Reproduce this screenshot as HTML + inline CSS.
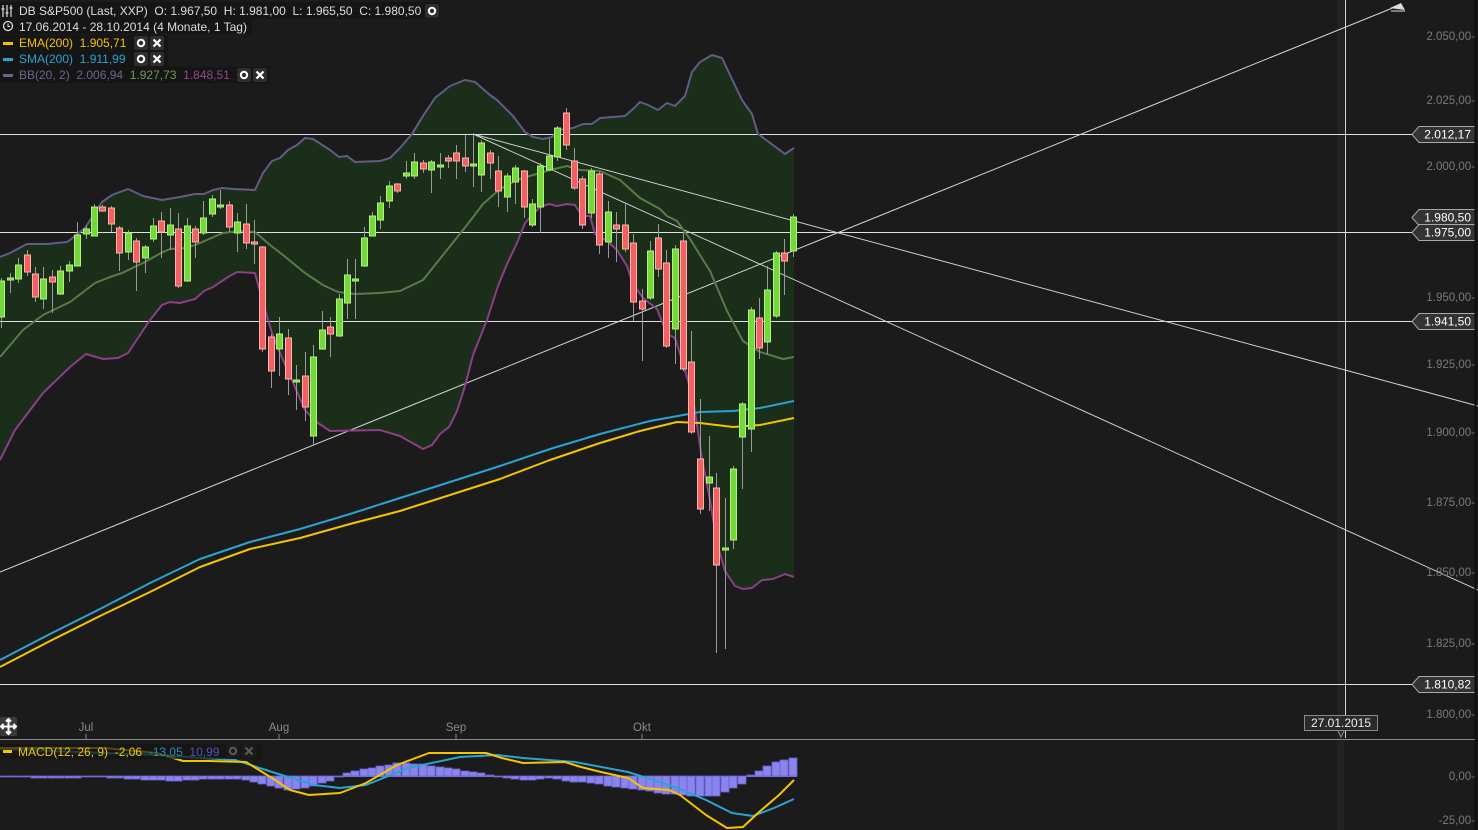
<!DOCTYPE html>
<html><head><meta charset="utf-8"><style>
html,body{margin:0;padding:0;background:#1c1b1b;width:1478px;height:830px;overflow:hidden}
svg{display:block}
text{font-family:"Liberation Sans",Arial,sans-serif;white-space:pre}
</style></head><body>
<svg id="s" width="1478" height="830" xmlns="http://www.w3.org/2000/svg">
<rect width="1478" height="830" fill="#1c1b1b"/>
<rect x="1337" y="0" width="7" height="830" fill="#232222"/>
<g id="g"></g>
<line x1="1475.5" y1="0" x2="1475.5" y2="830" stroke="#0e0e0e" stroke-width="2"/>
<g font-size="11.5" fill="#7a7a7a" text-anchor="end">
<text x="1475" y="40">2.050,00-</text>
<text x="1475" y="104">2.025,00-</text>
<text x="1475" y="170">2.000,00-</text>
<text x="1475" y="301">1.950,00-</text>
<text x="1475" y="368">1.925,00-</text>
<text x="1475" y="436">1.900,00-</text>
<text x="1475" y="506">1.875,00-</text>
<text x="1475" y="576">1.850,00-</text>
<text x="1475" y="647">1.825,00-</text>
<text x="1475" y="718">1.800,00-</text>
<text x="1475" y="780">0,00-</text>
<text x="1475" y="824">-25,00-</text>
</g>
<line x1="0" y1="739.5" x2="1475" y2="739.5" stroke="#8a8a8a" stroke-width="1"/>
<g font-size="11.5" fill="#8a8a8a" text-anchor="middle">
<text x="86" y="731">Jul</text><text x="279" y="731">Aug</text><text x="456" y="731">Sep</text><text x="642" y="731">Okt</text>
</g>
<g stroke="#8a8a8a"><line x1="86" y1="734" x2="86" y2="739"/><line x1="279" y1="734" x2="279" y2="739"/><line x1="456" y1="734" x2="456" y2="739"/><line x1="642" y1="734" x2="642" y2="739"/></g>
<rect x="1304.5" y="715.5" width="73" height="15" fill="#2a2a2a" stroke="#8a8a8a"/>
<path d="M1338 731 L1341 737 L1344 731" fill="#2a2a2a" stroke="#8a8a8a"/>
<text x="1341" y="727" font-size="12" fill="#eee" text-anchor="middle">27.01.2015</text>
<rect x="0" y="717" width="17" height="19" rx="2" fill="#3a3a3a"/>
<path d="M8.5 719 V734 M1 726.5 H16 M6 721.5 L8.5 719 L11 721.5 M6 731.5 L8.5 734 L11 731.5 M3.5 724 L1 726.5 L3.5 729 M13.5 724 L16 726.5 L13.5 729" stroke="#fff" stroke-width="2" fill="none"/>
<g font-size="12">
<rect x="0" y="2" width="440" height="17" fill="#141414" opacity=".8"/>
<rect x="0" y="18" width="252" height="16" fill="#141414" opacity=".8"/>
<rect x="0" y="35" width="168" height="16" fill="#141414" opacity=".8"/>
<rect x="0" y="51" width="168" height="16" fill="#141414" opacity=".8"/>
<rect x="0" y="67" width="270" height="16" fill="#141414" opacity=".8"/>
<g stroke="#ddd" stroke-width="1.2" fill="none"><path d="M3 5v12M7 5v12M11 5v12"/><path d="M1.5 9h3M5.5 13h3M9.5 8h3"/></g>
<text x="19" y="15" fill="#ddd">DB S&amp;P500 (Last, XXP)  O: 1.967,50  H: 1.981,00  L: 1.965,50  C: 1.980,50</text>
<circle cx="8" cy="26" r="4.5" stroke="#ddd" stroke-width="1.3" fill="none"/><path d="M8 23.5v3h2" stroke="#ddd" fill="none"/>
<text x="19" y="31" fill="#ddd">17.06.2014 - 28.10.2014 (4 Monate, 1 Tag)</text>
<rect x="3" y="42" width="10" height="3" fill="#f5c400"/>
<text x="19" y="47" fill="#f5c400">EMA(200)  1.905,71</text>
<rect x="3" y="58" width="10" height="3" fill="#2aa3d2"/>
<text x="19" y="63" fill="#2aa3d2">SMA(200)  1.911,99</text>
<rect x="3" y="74" width="10" height="3" fill="#6b6590"/>
<text x="19" y="79" fill="#6b6590">BB(20, 2)  2.006,94  <tspan fill="#6f9a55">1.927,73</tspan>  <tspan fill="#8e4a8a">1.848,51</tspan></text>
</g>
<g id="icons"></g>
<rect x="0" y="744" width="262" height="15" fill="#141414" opacity=".7"/>
<rect x="3" y="750" width="9" height="3" fill="#f5c400"/>
<text x="18" y="756" font-size="12" fill="#f5c400">MACD(12, 26, 9)  -2,06  <tspan fill="#2a8fb8">-13,05</tspan>  <tspan fill="#5a52b0">10,99</tspan></text>
</svg>
<script>
var g=document.getElementById('g'),h='';
function pl(p){return p.map(function(a){return a[0]+','+a[1]}).join(' ')}
var up=[[0,257],[10,253],[27,244],[47,244],[67,242],[70,240],[85,228],[102,202],[112,195],[128,189],[143,196],[162,200],[180,197],[195,194],[204,194],[213,190],[222,188],[233,189],[255,190],[263,173],[272,161],[280,158],[288,150],[297,145],[305,138],[313,139],[330,150],[339,157],[347,156],[355,162],[380,161],[390,158],[400,148],[412,134],[423,116],[435,98],[450,86],[465,80],[475,82],[490,95],[497,100],[513,116],[525,132],[533,137],[543,139],[552,137],[558,130],[573,128],[583,124],[592,124],[600,118],[625,116],[633,109],[640,102],[648,105],[658,110],[667,103],[675,106],[685,96],[692,72],[700,62],[712,55],[722,58],[730,75],[742,100],[752,114],[758,134],[773,145],[785,154],[794,148]];
var lo=[[0,460],[5,450],[15,430],[43,393],[70,367],[86,354],[103,359],[118,358],[128,353],[150,320],[162,305],[170,302],[180,303],[195,299],[204,291],[213,287],[228,277],[237,272],[255,273],[263,303],[272,333],[280,353],[305,410],[315,421],[330,431],[380,430],[400,436],[423,449],[432,445],[440,434],[449,427],[457,411],[465,386],[473,355],[487,320],[498,286],[507,264],[517,243],[525,223],[540,207],[549,204],[557,206],[567,204],[575,205],[582,216],[590,216],[595,234],[607,241],[617,250],[627,266],[633,284],[643,298],[657,309],[667,334],[675,338],[683,363],[693,398],[702,459],[710,500],[717,543],[725,571],[735,586],[743,589],[752,588],[762,580],[773,579],[785,574],[794,577]];
var mid=[[0,357],[23,330],[43,315],[70,302],[95,283],[110,277],[122,273],[143,263],[163,252],[170,249],[187,248],[200,243],[223,233],[240,231],[255,232],[270,245],[283,255],[305,273],[323,285],[338,292],[355,294],[380,293],[400,291],[423,280],[447,250],[467,225],[483,204],[500,189],[517,180],[533,175],[550,170],[567,166],[580,170],[600,171],[620,180],[640,198],[660,209],[667,216],[677,221],[690,239],[710,271],[727,311],[743,341],[760,352],[783,359],[794,357]];
h+='<polygon points="'+pl(up.concat(lo.slice().reverse()))+'" fill="#1a2e1a"/>';
var sma=[[0,660],[50,634],[100,609],[150,583],[200,559],[250,542],[300,529],[350,514],[400,498],[450,482],[500,466],[550,449],[600,434],[650,421],[700,412],[733,411],[760,408],[794,401]];
var ema=[[0,667],[50,641],[100,616],[150,592],[200,567],[250,549],[300,538],[350,524],[400,511],[450,495],[500,479],[550,460],[600,443],[640,431],[677,422],[700,423],[733,427],[760,425],[794,418]];
[134,232,321,684].forEach(function(y){h+='<line x1="0" y1="'+(y+.5)+'" x2="1412" y2="'+(y+.5)+'" stroke="#e0e0e0" stroke-width="1"/>'});
h+='<line x1="1345.5" y1="0" x2="1345.5" y2="738" stroke="#d8d8d8" stroke-width="1"/>';
h+='<line x1="0" y1="572" x2="1400" y2="5" stroke="#d8d8d8" stroke-width="1"/>';
h+='<line x1="473" y1="134" x2="1478" y2="406" stroke="#d0d0d0" stroke-width="1"/>';
h+='<line x1="473" y1="134" x2="1478" y2="590" stroke="#d0d0d0" stroke-width="1"/>';
h+='<path d="M1390 8 L1401 3 L1405 10 Z" fill="#ddd"/><line x1="1391" y1="11" x2="1405" y2="11" stroke="#ddd"/>';
var L=' fill="none" stroke-linejoin="round" stroke-width="2" stroke=';
h+='<polyline points="'+pl(up)+'"'+L+'"#625c85"/>';
h+='<polyline points="'+pl(lo)+'"'+L+'"#8b3f86"/>';
h+='<polyline points="'+pl(mid)+'"'+L+'"#5c7a48"/>';
h+='<polyline points="'+pl(sma)+'"'+L+'"#2aa3d2"/>';
h+='<polyline points="'+pl(ema)+'"'+L+'"#f5c400"/>';
var C=[[1,317,281,278,328],[10,278,278,273,293],[18,279,265,258,283],[27,255,272,250,276],[35,274,297,267,302],[43,299,279,267,309],[52,277,282,270,313],[60,294,271,266,295],[69,271,265,261,282],[77,266,235,222,266],[86,234,229,226,239],[94,236,207,204,236],[102,207,211,205,212],[111,208,224,206,232],[119,228,253,226,271],[128,252,233,230,260],[136,241,262,238,291],[145,258,247,245,273],[153,239,226,218,242],[161,221,232,212,258],[170,235,225,208,250],[178,229,286,213,288],[187,281,226,218,282],[195,229,242,226,258],[203,233,218,201,235],[212,214,199,195,217],[220,205,205,190,209],[229,205,227,201,232],[237,233,222,213,252],[246,224,243,204,249],[254,242,242,220,264],[262,247,349,246,352],[271,337,371,334,388],[279,349,334,317,376],[288,338,379,329,395],[296,380,380,365,410],[305,376,407,352,421],[313,436,357,345,445],[322,349,330,311,350],[330,327,334,317,357],[339,336,299,294,337],[347,303,275,259,319],[355,279,279,259,319],[364,266,238,227,267],[372,236,216,212,236],[380,220,203,196,229],[389,201,186,181,208],[397,184,191,183,193],[406,176,173,161,179],[414,176,162,153,179],[423,163,169,160,173],[431,170,162,160,193],[440,165,165,153,179],[448,158,161,155,168],[456,153,161,145,179],[465,158,166,135,172],[473,165,164,135,187],[481,175,143,140,192],[490,153,163,150,179],[498,171,191,156,207],[507,197,176,173,212],[515,182,168,165,204],[524,171,207,170,218],[532,225,204,199,227],[540,207,166,163,233],[549,170,156,139,171],[557,157,128,126,161],[566,113,145,108,150],[574,161,188,148,190],[582,179,225,176,229],[591,213,171,168,218],[599,174,245,172,254],[608,242,212,201,258],[616,225,229,212,262],[625,225,249,204,252],[633,243,302,234,321],[642,301,309,289,361],[650,298,251,241,300],[658,238,269,224,277],[666,263,346,250,348],[675,329,249,245,364],[683,241,369,232,371],[691,362,432,331,434],[700,459,509,399,514],[709,483,477,436,511],[716,488,565,473,653],[725,548,548,498,649],[733,540,469,466,549],[742,437,404,402,489],[751,429,310,307,452],[759,318,348,298,359],[767,342,290,266,354],[776,316,253,251,318],[784,253,261,239,295],[793,251,217,214,257]];
C.forEach(function(c){var x=c[0],o=c[1],cl=c[2],t=Math.min(o,cl),b=Math.max(o,cl),gr=cl<=o&&!(o==cl&&c[0]==254);
h+='<line x1="'+(x+.5)+'" y1="'+c[3]+'" x2="'+(x+.5)+'" y2="'+c[4]+'" stroke="#9a9a9a" stroke-width="1"/>';
var hh=Math.max(b-t,2);
h+='<rect x="'+(x-2.5)+'" y="'+t+'" width="6" height="'+hh+'" fill="'+(gr?'#74d83c':'#f06262')+'" stroke="'+(gr?'#b4f27c':'#ffb0b0')+'" stroke-width="1"/>';});
function tag(y,t){h+='<path d="M1412 '+(y+.5)+' L1419 '+(y-7.5)+' H1476 V'+(y+8.5)+' H1419 Z" fill="#333" stroke="#aaa" stroke-width="1"/><text x="1471" y="'+(y+4.5)+'" font-size="12" fill="#fff" text-anchor="end">'+t+'</text>';}
tag(134,'2.012,17');tag(217,'1.980,50');tag(232,'1.975,00');tag(321,'1.941,50');tag(684,'1.810,82');
var hk=[[0,-1],[60,-2],[100,-1],[120,-2],[150,-4],[175,-5],[210,-3],[240,-3],[255,-6],[270,-10],[290,-14],[305,-12],[320,-8],[335,-3],[345,2],[360,6],[380,10],[400,13],[420,12],[440,9],[460,6],[480,3],[495,0],[510,-3],[530,-4],[550,-2],[560,-4],[575,-6],[590,-7],[610,-10],[625,-12],[640,-14],[660,-17],[680,-19],[700,-20],[715,-20],[730,-14],[742,-8],[748,-1],[755,3],[765,9],[775,14],[784,16],[793,18]];
function iv(x){for(var i=0;i<hk.length-1;i++){if(x<=hk[i+1][0]){var a=hk[i],b=hk[i+1];return a[1]+(b[1]-a[1])*(x-a[0])/(b[0]-a[0]);}}return hk[hk.length-1][1];}
h+='<line x1="0" y1="776.5" x2="797" y2="776.5" stroke="#7a74d8" stroke-width="1"/>';
C.forEach(function(c){var v=Math.round(iv(c[0]));if(!v)return;var x=c[0]-4;
if(v>0)h+='<rect x="'+x+'" y="'+(776-v)+'" width="8" height="'+v+'" fill="#8a84ee" stroke="#6a63d0" stroke-width=".8"/>';
else h+='<rect x="'+x+'" y="776" width="8" height="'+(-v)+'" fill="#8a84ee" stroke="#6a63d0" stroke-width=".8"/>';});
var ml=[[0,748],[105,748],[157,753],[183,761],[209,761],[246,762],[272,778],[290,790],[309,795],[340,793],[366,783],[397,765],[429,753],[460,753],[486,753],[502,758],[523,763],[565,762],[581,767],[601,772],[628,778],[643,788],[669,790],[680,795],[706,815],[727,828],[743,827],[758,813],[779,795],[794,780]];
var sl=[[0,749],[157,755],[235,760],[272,772],[314,785],[340,788],[366,785],[408,768],[460,757],[497,755],[523,758],[575,762],[628,772],[675,787],[706,800],[732,813],[753,816],[774,808],[794,799]];
h+='<polyline points="'+pl(sl)+'"'+L+'"#2aa3d2"/>';
h+='<polyline points="'+pl(ml)+'"'+L+'"#f5c400"/>';
g.innerHTML=h;
var ic='';
function icons(x,y){ic+='<rect x="'+x+'" y="'+y+'" width="14" height="14" rx="2" fill="#2e2e2e"/><circle cx="'+(x+7)+'" cy="'+(y+7)+'" r="3.2" fill="none" stroke="#fff" stroke-width="2"/>';
ic+='<rect x="'+(x+16)+'" y="'+y+'" width="14" height="14" rx="2" fill="#2e2e2e"/><path d="M'+(x+19.5)+' '+(y+3.5)+'l7 7m0 -7l-7 7" stroke="#fff" stroke-width="2.2"/>';}
ic+='<rect x="425" y="4" width="14" height="14" rx="2" fill="#2e2e2e"/><circle cx="432" cy="11" r="3.2" fill="none" stroke="#fff" stroke-width="2"/>';
icons(134,36);icons(134,52);icons(237,68);icons(226,744);
document.getElementById('icons').innerHTML=ic;
</script>
</body></html>
